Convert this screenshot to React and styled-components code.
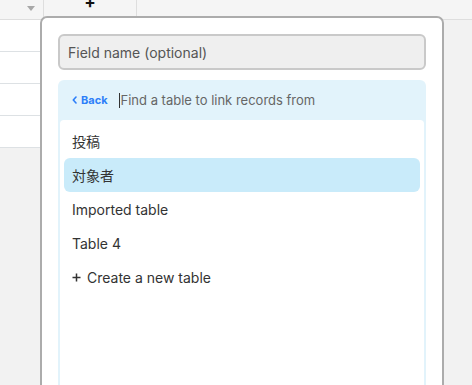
import React from 'react';
import styled, { createGlobalStyle } from 'styled-components';

const GlobalStyle = createGlobalStyle`
  html, body {
    margin: 0;
    padding: 0;
    width: 472px;
    height: 385px;
    overflow: hidden;
    background: #f2f2f2;
    font-family: Inter, "Noto Sans CJK JP", sans-serif;
  }
`;

const Page = styled.div`
  position: relative;
  width: 472px;
  height: 385px;
  overflow: hidden;
  background: #f2f2f2;
`;

const HeaderRow = styled.div`
  display: flex;
  height: 19px;
  background: #f5f5f5;
  border-bottom: 1px solid #dedede;
`;

const HeaderCell = styled.div`
  position: relative;
  width: ${(p) => p.$w}px;
  border-right: 1px solid #dedede;
  display: flex;
  align-items: flex-start;
  justify-content: ${(p) => p.$align || 'center'};
  padding-right: ${(p) => p.$pr || 0}px;
  box-sizing: border-box;
`;

const Caret = styled.span`
  margin-top: 6px;
  width: 0;
  height: 0;
  border-left: 4px solid transparent;
  border-right: 4px solid transparent;
  border-top: 5px solid #a8a8a8;
`;

const Plus = styled.span`
  margin-top: -6px;
  font-size: 17px;
  font-weight: 700;
  color: #111;
  line-height: 1;
`;

const Rows = styled.div`
  width: 200px;
`;

const GridRow = styled.div`
  height: 31px;
  background: #fff;
  border-bottom: 1px solid #dde1e4;
`;

const Dialog = styled.div`
  position: absolute;
  left: 40px;
  top: 16px;
  width: 404px;
  height: 400px;
  box-sizing: border-box;
  background: #fff;
  border: 2px solid #acacac;
  border-radius: 7px;
  padding: 16px 16px 0;
  display: flex;
  flex-direction: column;
  gap: 10px;
`;

const NameInput = styled.div`
  height: 36px;
  box-sizing: border-box;
  background: #efefef;
  border: 2px solid #c9c9c9;
  border-radius: 6px;
  padding: 0 8px;
  display: flex;
  align-items: center;
  font-size: 14px;
  color: #555;
`;

const Panel = styled.div`
  flex: 1;
  background: #e2f3fb;
  border-radius: 6px 6px 0 0;
  padding: 0 2px;
  display: flex;
  flex-direction: column;
`;

const PanelHead = styled.div`
  height: 40px;
  display: flex;
  align-items: center;
  padding-left: 12px;
`;

const Back = styled.span`
  display: flex;
  align-items: center;
  gap: 4px;
  color: #2d7ff9;
  font-size: 11px;
  font-weight: 700;
  margin-right: 11px;
`;

const SearchText = styled.span`
  display: flex;
  align-items: center;
  font-size: 13px;
  color: #666;
`;

const Cursor = styled.span`
  width: 1px;
  height: 15px;
  background: #333;
  margin-right: 1px;
`;

const List = styled.div`
  flex: 1;
  background: #fff;
  border-radius: 4px 4px 0 0;
  padding: 4px;
  display: flex;
  flex-direction: column;
`;

const Item = styled.div`
  height: 34px;
  display: flex;
  align-items: center;
  gap: 6px;
  padding-left: 8px;
  border-radius: 6px;
  font-size: 14px;
  color: #333;
  background: ${(p) => (p.$active ? '#c9ebfa' : 'transparent')};
`;

const tables = ['投稿', '対象者', 'Imported table', 'Table 4'];

export default function App() {
  return (
    <Page>
      <GlobalStyle />
      <HeaderRow>
        <HeaderCell $w={44} $align="flex-end" $pr={8}>
          <Caret />
        </HeaderCell>
        <HeaderCell $w={93}>
          <Plus>+</Plus>
        </HeaderCell>
      </HeaderRow>
      <Rows>
        <GridRow />
        <GridRow />
        <GridRow />
        <GridRow />
      </Rows>
      <Dialog>
        <NameInput>Field name (optional)</NameInput>
        <Panel>
          <PanelHead>
            <Back>
              <svg width="5" height="8" viewBox="0 0 5 8">
                <path d="M4 1 L1.3 4 L4 7" fill="none" stroke="#2d7ff9" strokeWidth="1.6" strokeLinecap="round" strokeLinejoin="round" />
              </svg>
              Back
            </Back>
            <SearchText>
              <Cursor />
              Find a table to link records from
            </SearchText>
          </PanelHead>
          <List>
            {tables.map((t, i) => (
              <Item key={t} $active={i === 1}>{t}</Item>
            ))}
            <Item>
              <svg width="9" height="9" viewBox="0 0 9 9">
                <path d="M4.5 0.5 V8.5 M0.5 4.5 H8.5" stroke="#333" strokeWidth="1.5" />
              </svg>
              Create a new table
            </Item>
          </List>
        </Panel>
      </Dialog>
    </Page>
  );
}
